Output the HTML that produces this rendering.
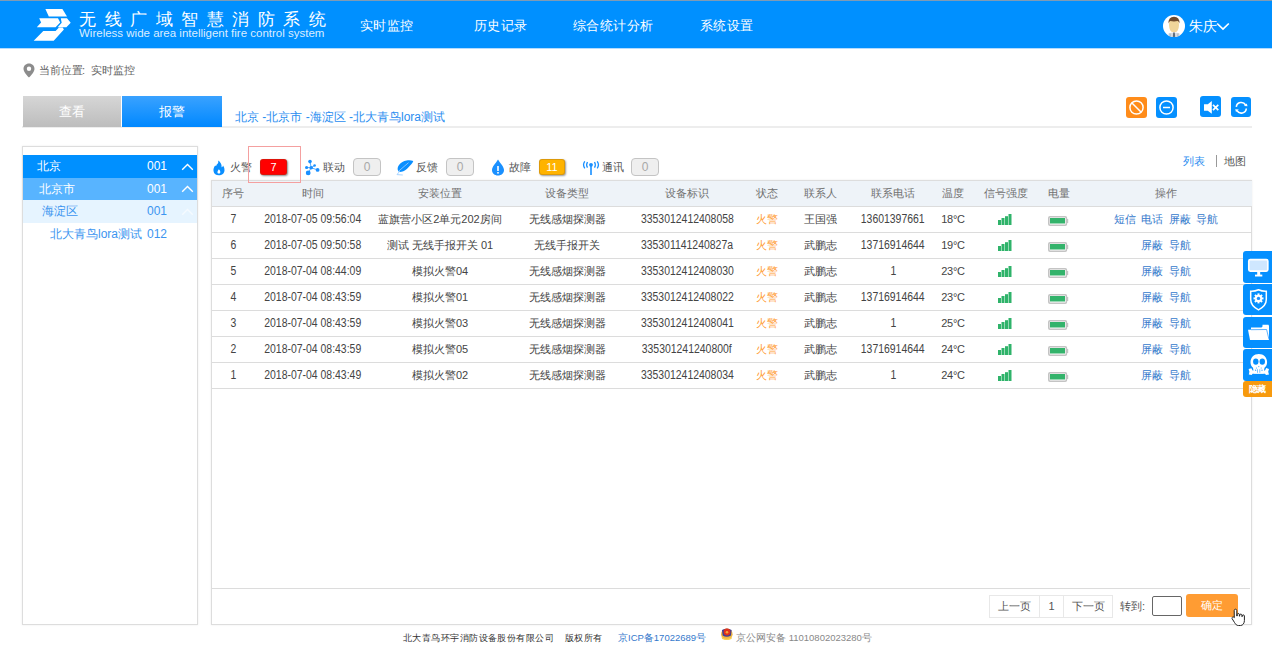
<!DOCTYPE html>
<html><head><meta charset="utf-8">
<style>
*{margin:0;padding:0;box-sizing:border-box}
html,body{width:1272px;height:649px;overflow:hidden;background:#fff;font-family:"Liberation Sans",sans-serif;color:#333}
.abs{position:absolute}
#top{position:absolute;left:0;top:0;width:1272px;height:1px;background:#7f9bb5;z-index:9}
#hdr{position:absolute;left:0;top:1px;width:1272px;height:47px;background:#0090ff}
.t1{position:absolute;left:79px;top:9px;font-size:17px;color:#fff;letter-spacing:8.5px;white-space:nowrap;line-height:20px}
.t2{position:absolute;left:79px;top:26px;font-size:11.5px;color:rgba(255,255,255,.86);white-space:nowrap;line-height:13px}
.nav{position:absolute;top:16px;font-size:13px;letter-spacing:0.4px;color:#fff;line-height:18px;white-space:nowrap}
.crumb{position:absolute;left:39px;top:63px;font-size:11px;color:#666;line-height:14px}
.tab{position:absolute;top:96px;height:31px;width:99px;z-index:2;color:#fff;font-size:13px;text-align:center;line-height:31px}
.path{position:absolute;left:235px;top:109px;font-size:12px;color:#2a8df0;line-height:16px;white-space:nowrap}
.hline{position:absolute;left:22px;top:126px;width:1230px;height:2px;background:#ededed}
.ico{position:absolute;top:97px;width:21px;height:21px;border-radius:3px;background:#0590ff}
#tree{position:absolute;left:22px;top:146px;width:176px;height:479px;border:1px solid #ddd;box-shadow:0 0 2px rgba(0,0,0,.08)}
.trow{position:absolute;left:0;width:174px;height:22.5px;font-size:12px;line-height:22px;white-space:nowrap}
.trow .n{position:absolute;left:124px}
.trow .c{position:absolute;left:159px;top:0}
#main{position:absolute;left:211px;top:180px;width:1041px;height:445px;border:1px solid #ddd;box-shadow:0 0 2px rgba(0,0,0,.08)}
.stat{position:absolute;top:158px;font-size:11px;color:#555;line-height:18px;white-space:nowrap}
.badge{position:absolute;height:16px;border-radius:3px;color:#fff;font-size:11px;text-align:center;line-height:14px;border:1px solid rgba(120,80,40,.25)}
.gbadge{position:absolute;top:158px;height:18px;width:28px;border:1.5px solid #c4c4c4;border-radius:4px;background:#efefef;color:#a8a8a8;font-size:12px;text-align:center;line-height:17px}
table{border-collapse:collapse;table-layout:fixed;position:absolute;left:0;top:0;width:1040px}
th{height:25px;background:#eef3f8;font-weight:normal;font-size:11px;color:#707070;border-bottom:1px solid #dcdcdc}
td{height:26px;font-size:11px;color:#444;text-align:center;border-bottom:1px solid #dcdcdc;white-space:nowrap}
.op{color:#3579cc;margin:0 1px}
.pg{position:absolute;top:595px;height:23px;border:1px solid #e8e8e8;font-size:11px;color:#555;line-height:21px;text-align:center}
.foot{position:absolute;top:632px;font-size:9.5px;line-height:12px;color:#333;white-space:nowrap}
.sb{position:absolute;left:1243px;width:31px;height:30.5px;background:#0590ff;border-radius:3px 0 0 3px}
.tmp{letter-spacing:-0.3px}
.num{display:inline-block;font-size:12px;transform:scaleX(0.87);letter-spacing:0}
</style></head><body>
<div id="top"></div><div class="abs" style="left:0;top:48px;width:1272px;height:1px;background:#b3dbff"></div>
<div id="hdr">
  <svg class="abs" style="left:0;top:-1px" width="80" height="48" viewBox="0 0 80 48">
    <g fill="#fff">
      <polygon points="45.4,9 62.4,9 67,16.4 48.8,16.4"/>
      <polygon points="60.8,18.3 67,18.3 70.7,22.7 66.4,27.2 57.7,27.2 61.7,22.7"/>
      <polygon points="39.2,18.3 58,18.3 60.2,22.6 55.6,27.2 36.8,27.2 41.1,22.6"/>
      <polygon points="33.7,40.8 53.7,40.8 63.9,29.4 62.7,27.5 59,27.5 55.6,30.9 43.3,30.9"/>
    </g>
  </svg>
  <div class="t1">无线广域智慧消防系统</div>
  <div class="t2">Wireless wide area intelligent fire control system</div>
  <div class="nav" style="left:360px">实时监控</div>
  <div class="nav" style="left:474px">历史记录</div>
  <div class="nav" style="left:573px">综合统计分析</div>
  <div class="nav" style="left:700px">系统设置</div>
  <div class="abs" style="left:1163px;top:14px;width:22px;height:22px;border-radius:50%;background:#fff;overflow:hidden">
    <svg width="22" height="22" viewBox="0 0 22 22">
      <path d="M6,10 Q5.6,3.5 11,3.5 Q16.4,3.5 16,10 Q15.6,15.5 13.2,17 L8.8,17 Q6.4,15.5 6,10Z" fill="#f0d59a"/>
      <path d="M5.6,8.5 Q5.2,1.8 11,1.8 Q16.8,1.8 16.4,8.5 Q16,6.6 14.8,6 Q11,6.8 7.2,6 Q6,6.6 5.6,8.5Z" fill="#6e4a2d"/>
      <path d="M5,22 L5.6,18.2 Q8,17.4 11,17.4 Q14,17.4 16.4,18.2 L17,22Z" fill="#d5dbe2"/>
      <path d="M10.2,17.6 L11.8,17.6 L12.2,22 L9.8,22Z" fill="#5d6b7a"/>
      <path d="M7,18.5 L7.3,22 M15,18.5 L14.7,22" stroke="#8c99a8" stroke-width="0.6"/>
    </svg>
  </div>
  <div class="nav" style="left:1189px;top:16px;font-size:14px;letter-spacing:0">朱庆</div>
  <svg class="abs" style="left:1216px;top:21px" width="14" height="9" viewBox="0 0 14 9"><path d="M1.2,1.5 L7,7 L12.8,1.5" stroke="#fff" stroke-width="1.7" fill="none"/></svg>
</div>
<svg class="abs" style="left:23px;top:63px" width="12" height="15" viewBox="0 0 12 15"><path d="M6,0.5 C2.8,0.5 0.5,2.9 0.5,5.9 C0.5,9.3 6,14.5 6,14.5 C6,14.5 11.5,9.3 11.5,5.9 C11.5,2.9 9.2,0.5 6,0.5Z M6,3.6 A2.2,2.2 0 1 1 6,8 A2.2,2.2 0 1 1 6,3.6Z" fill="#8c8c8c" fill-rule="evenodd"/></svg>
<div class="crumb">当前位置</div><div class="crumb" style="left:82px;top:62.5px">:</div><div class="crumb" style="left:91px">实时监控</div>
<div class="tab" style="left:23px;width:98px;background:linear-gradient(#d6d6d6,#bdbdbd)">查看</div>
<div class="tab" style="left:122px;width:100px;background:linear-gradient(#3aa2ff,#0088ff)">报警</div>
<div class="path">北京 -北京市 -海淀区 -北大青鸟lora测试</div>
<div class="hline"></div>
<div class="ico" style="left:1126px;background:#ff8c1a"><svg width="21" height="21" viewBox="0 0 21 21"><circle cx="10.5" cy="10.5" r="6.6" stroke="#fff" stroke-width="1.5" fill="none"/><path d="M6,6 L15,15" stroke="#fff" stroke-width="1.5"/></svg></div>
<div class="ico" style="left:1156px"><svg width="21" height="21" viewBox="0 0 21 21"><circle cx="10.5" cy="10.5" r="6.6" stroke="#fff" stroke-width="1.5" fill="none"/><path d="M7,10.5 L14,10.5" stroke="#fff" stroke-width="1.5"/></svg></div>
<div class="ico" style="left:1200px;top:96px"><svg width="21" height="21" viewBox="0 0 21 21"><path d="M4,8.2 L7.8,8.2 L11.8,5 L11.8,17.8 L7.8,14.8 L4,14.8Z" fill="#fff"/><path d="M13,8.8 L18.3,14.2 M18.3,8.8 L13,14.2" stroke="#fff" stroke-width="1.7"/></svg></div>
<div class="ico" style="left:1231px;width:20px;height:20px"><svg width="20" height="20" viewBox="0 0 20 20"><path d="M5.3,9.8 A5,5 0 0 1 14.6,8" stroke="#fff" stroke-width="1.6" fill="none"/><path d="M15.3,11.5 A5,5 0 0 1 6,13.6" stroke="#fff" stroke-width="1.6" fill="none"/><path d="M13,9 L16.5,9.2 L15.8,6.5Z" fill="#fff"/><path d="M7.8,12.6 L4.2,12.3 L5,15Z" fill="#fff"/></svg></div>


<div id="tree">
  <div class="trow" style="top:8px;background:#0090ff;color:#fff"><span style="position:absolute;left:14px">北京</span><span class="n">001</span><svg class="c" style="top:7.5px;left:158px" width="13" height="8" viewBox="0 0 13 8"><path d="M1.2,6.8 L6.5,1.6 L11.8,6.8" stroke="#fff" stroke-width="1.4" fill="none"/></svg></div>
  <div class="trow" style="top:30.5px;background:#58b4ff;color:#fff"><span style="position:absolute;left:16px">北京市</span><span class="n">001</span><svg class="c" style="top:7.5px;left:158px" width="13" height="8" viewBox="0 0 13 8"><path d="M1.2,6.8 L6.5,1.6 L11.8,6.8" stroke="#fff" stroke-width="1.4" fill="none"/></svg></div>
  <div class="trow" style="top:53px;background:#e6f4ff;color:#3c95f0"><span style="position:absolute;left:19px">海淀区</span><span class="n">001</span><svg class="c" style="top:7.5px;left:158px" width="13" height="8" viewBox="0 0 13 8"><path d="M1.2,6.8 L6.5,1.6 L11.8,6.8" stroke="#f5faff" stroke-width="1.4" fill="none"/></svg></div>
  <div class="trow" style="top:75.5px;color:#3c95f0"><span style="position:absolute;left:27px">北大青鸟lora测试</span><span class="n">012</span></div>
</div>

<svg class="abs" style="left:213px;top:160px" width="12" height="16" viewBox="0 0 12 16"><path d="M5,0.5 C6,2.8 4.5,4 3.6,4.8 C3.6,6 2.8,6.2 2.2,5.6 C0.8,7.4 0.3,9 0.5,11 C0.9,14 3,15.3 5.8,15.3 C9,15.3 11.5,13.2 11.5,10.2 C11.5,8 10.6,6.6 10,5.6 C9.8,6.8 9.2,7.3 8.6,7.2 C9,4.2 7.2,1.6 5,0.5Z M5.9,9.2 C7.6,10.8 8,13.5 5.9,13.6 C3.9,13.6 4.2,10.9 5.9,9.2Z" fill="#0a8fff" fill-rule="evenodd"/></svg>
<div class="stat" style="left:230px">火警</div>

<div class="badge" style="left:260px;top:159px;width:27px;background:#f00;box-shadow:1px 1px 2px rgba(0,0,0,.45)">7</div>
<svg class="abs" style="left:302px;top:157px" width="20" height="20" viewBox="0 0 20 20"><g stroke="#2a96ff" stroke-width="0.8"><path d="M8,4.6 L9.2,10.8 M4.6,10.5 L9.2,10.8 M12.6,8.5 L9.2,10.8 M15.6,12.9 L9.2,10.8 M6.2,15.9 L9.2,10.8"/></g><g fill="#1a8fff"><circle cx="8" cy="4.6" r="1.8"/><circle cx="4.6" cy="10.5" r="1.6"/><circle cx="9.2" cy="10.8" r="1.8"/><circle cx="12.6" cy="8.5" r="1.3"/><circle cx="15.6" cy="12.9" r="1.9"/><circle cx="6.2" cy="15.9" r="2.4"/></g></svg>
<div class="stat" style="left:323px">联动</div>
<div class="gbadge" style="left:353px">0</div>
<svg class="abs" style="left:396px;top:160px" width="18" height="16" viewBox="0 0 18 16"><path d="M17.3,1 C15,0.2 12.5,0.2 10.6,0.6 C7.5,1.2 5,2.5 3,5 C1.8,6.6 1.4,8.5 1.8,10 C2.2,11.5 3.5,12.2 5.5,11.8 C8,11.3 10.5,9.5 12.3,7.5 C14.5,5.2 16.5,3.5 17.3,1Z" fill="#0a8fff"/><path d="M2.6,11.2 L12.5,2.7" stroke="#9fd0ff" stroke-width="0.8"/><path d="M3.5,11.5 L1,14.6 L6.8,15" stroke="#a8d4ff" stroke-width="1" fill="none"/></svg>
<div class="stat" style="left:416px">反馈</div>
<div class="gbadge" style="left:446px">0</div>
<svg class="abs" style="left:491px;top:159px" width="14" height="17" viewBox="0 0 14 17"><path d="M7,0.5 C5,4 1,7.5 1,11 C1,14.3 3.7,16.5 7,16.5 C10.3,16.5 13,14.3 13,11 C13,7.5 9,4 7,0.5Z" fill="#1a90ff"/><rect x="6.2" y="7" width="1.6" height="5" fill="#fff"/><rect x="6.2" y="13" width="1.6" height="1.6" fill="#fff"/></svg>
<div class="stat" style="left:509px">故障</div>
<div class="badge" style="left:539px;top:159px;width:26px;background:#ffb300;box-shadow:1px 1px 2px rgba(0,0,0,.4)">11</div>
<svg class="abs" style="left:582px;top:161px" width="18" height="14" viewBox="0 0 18 14"><circle cx="9" cy="3.8" r="1.9" fill="#1a90ff"/><rect x="8.2" y="4" width="1.6" height="10" fill="#1a90ff"/><g stroke="#1a90ff" stroke-width="1.3" fill="none"><path d="M5.5,1 Q3.8,3.8 5.5,6.6"/><path d="M12.5,1 Q14.2,3.8 12.5,6.6"/><path d="M2.8,0.3 Q0.3,3.8 2.8,7.3"/><path d="M15.2,0.3 Q17.7,3.8 15.2,7.3"/></g></svg>
<div class="stat" style="left:602px">通讯</div>
<div class="gbadge" style="left:631px">0</div>
<div class="stat" style="left:1183px;top:152px;color:#2a8df0">列表</div>
<div class="abs" style="left:1216px;top:155px;width:1px;height:12px;background:#999"></div>
<div class="stat" style="left:1224px;top:152px">地图</div>
<div id="main">
<table>
<colgroup><col style="width:42px"><col style="width:118px"><col style="width:136px"><col style="width:118px"><col style="width:122px"><col style="width:38px"><col style="width:68px"><col style="width:78px"><col style="width:42px"><col style="width:64px"><col style="width:42px"><col style="width:172px"></colgroup>
<tr><th>序号</th><th>时间</th><th>安装位置</th><th>设备类型</th><th>设备标识</th><th>状态</th><th>联系人</th><th>联系电话</th><th>温度</th><th>信号强度</th><th>电量</th><th>操作</th></tr>
<tr><td><span class="num">7</span></td><td><span class="num">2018-07-05 09:56:04</span></td><td>蓝旗营小区2单元202房间</td><td>无线感烟探测器</td><td><span class="num">3353012412408058</span></td><td style="color:#ff9c33">火警</td><td>王国强</td><td><span class="num">13601397661</span></td><td><span class="tmp">18°C</span></td><td><svg width="14" height="11" viewBox="0 0 14 11" style="vertical-align:middle;position:relative;left:-1px"><g fill="#2fb36a"><rect x="0" y="6" width="3" height="5"/><rect x="3.5" y="4" width="3" height="7"/><rect x="7" y="2.2" width="3" height="8.8"/><rect x="10.5" y="0" width="3" height="11"/></g></svg></td><td><svg width="21" height="10" viewBox="0 0 21 10" style="vertical-align:middle;position:relative;left:-1px;top:1px"><rect x="0.8" y="0.8" width="17.6" height="8.4" rx="1.2" fill="#fff" stroke="#c4c4c4" stroke-width="1.6"/><rect x="19" y="3" width="1.2" height="4" fill="#c4c4c4"/><rect x="2" y="2" width="15" height="5.5" fill="#33b36b"/></svg></td><td><span class="op">短信</span> <span class="op">电话</span> <span class="op">屏蔽</span> <span class="op">导航</span></td></tr>
<tr><td><span class="num">6</span></td><td><span class="num">2018-07-05 09:50:58</span></td><td>测试 无线手报开关 01</td><td>无线手报开关</td><td><span class="num">335301141240827a</span></td><td style="color:#ff9c33">火警</td><td>武鹏志</td><td><span class="num">13716914644</span></td><td><span class="tmp">19°C</span></td><td><svg width="14" height="11" viewBox="0 0 14 11" style="vertical-align:middle;position:relative;left:-1px"><g fill="#2fb36a"><rect x="0" y="6" width="3" height="5"/><rect x="3.5" y="4" width="3" height="7"/><rect x="7" y="2.2" width="3" height="8.8"/><rect x="10.5" y="0" width="3" height="11"/></g></svg></td><td><svg width="21" height="10" viewBox="0 0 21 10" style="vertical-align:middle;position:relative;left:-1px;top:1px"><rect x="0.8" y="0.8" width="17.6" height="8.4" rx="1.2" fill="#fff" stroke="#c4c4c4" stroke-width="1.6"/><rect x="19" y="3" width="1.2" height="4" fill="#c4c4c4"/><rect x="2" y="2" width="15" height="5.5" fill="#33b36b"/></svg></td><td><span class="op">屏蔽</span> <span class="op">导航</span></td></tr>
<tr><td><span class="num">5</span></td><td><span class="num">2018-07-04 08:44:09</span></td><td>模拟火警04</td><td>无线感烟探测器</td><td><span class="num">3353012412408030</span></td><td style="color:#ff9c33">火警</td><td>武鹏志</td><td><span class="num">1</span></td><td><span class="tmp">23°C</span></td><td><svg width="14" height="11" viewBox="0 0 14 11" style="vertical-align:middle;position:relative;left:-1px"><g fill="#2fb36a"><rect x="0" y="6" width="3" height="5"/><rect x="3.5" y="4" width="3" height="7"/><rect x="7" y="2.2" width="3" height="8.8"/><rect x="10.5" y="0" width="3" height="11"/></g></svg></td><td><svg width="21" height="10" viewBox="0 0 21 10" style="vertical-align:middle;position:relative;left:-1px;top:1px"><rect x="0.8" y="0.8" width="17.6" height="8.4" rx="1.2" fill="#fff" stroke="#c4c4c4" stroke-width="1.6"/><rect x="19" y="3" width="1.2" height="4" fill="#c4c4c4"/><rect x="2" y="2" width="15" height="5.5" fill="#33b36b"/></svg></td><td><span class="op">屏蔽</span> <span class="op">导航</span></td></tr>
<tr><td><span class="num">4</span></td><td><span class="num">2018-07-04 08:43:59</span></td><td>模拟火警01</td><td>无线感烟探测器</td><td><span class="num">3353012412408022</span></td><td style="color:#ff9c33">火警</td><td>武鹏志</td><td><span class="num">13716914644</span></td><td><span class="tmp">23°C</span></td><td><svg width="14" height="11" viewBox="0 0 14 11" style="vertical-align:middle;position:relative;left:-1px"><g fill="#2fb36a"><rect x="0" y="6" width="3" height="5"/><rect x="3.5" y="4" width="3" height="7"/><rect x="7" y="2.2" width="3" height="8.8"/><rect x="10.5" y="0" width="3" height="11"/></g></svg></td><td><svg width="21" height="10" viewBox="0 0 21 10" style="vertical-align:middle;position:relative;left:-1px;top:1px"><rect x="0.8" y="0.8" width="17.6" height="8.4" rx="1.2" fill="#fff" stroke="#c4c4c4" stroke-width="1.6"/><rect x="19" y="3" width="1.2" height="4" fill="#c4c4c4"/><rect x="2" y="2" width="15" height="5.5" fill="#33b36b"/></svg></td><td><span class="op">屏蔽</span> <span class="op">导航</span></td></tr>
<tr><td><span class="num">3</span></td><td><span class="num">2018-07-04 08:43:59</span></td><td>模拟火警03</td><td>无线感烟探测器</td><td><span class="num">3353012412408041</span></td><td style="color:#ff9c33">火警</td><td>武鹏志</td><td><span class="num">1</span></td><td><span class="tmp">25°C</span></td><td><svg width="14" height="11" viewBox="0 0 14 11" style="vertical-align:middle;position:relative;left:-1px"><g fill="#2fb36a"><rect x="0" y="6" width="3" height="5"/><rect x="3.5" y="4" width="3" height="7"/><rect x="7" y="2.2" width="3" height="8.8"/><rect x="10.5" y="0" width="3" height="11"/></g></svg></td><td><svg width="21" height="10" viewBox="0 0 21 10" style="vertical-align:middle;position:relative;left:-1px;top:1px"><rect x="0.8" y="0.8" width="17.6" height="8.4" rx="1.2" fill="#fff" stroke="#c4c4c4" stroke-width="1.6"/><rect x="19" y="3" width="1.2" height="4" fill="#c4c4c4"/><rect x="2" y="2" width="15" height="5.5" fill="#33b36b"/></svg></td><td><span class="op">屏蔽</span> <span class="op">导航</span></td></tr>
<tr><td><span class="num">2</span></td><td><span class="num">2018-07-04 08:43:59</span></td><td>模拟火警05</td><td>无线感烟探测器</td><td><span class="num">335301241240800f</span></td><td style="color:#ff9c33">火警</td><td>武鹏志</td><td><span class="num">13716914644</span></td><td><span class="tmp">24°C</span></td><td><svg width="14" height="11" viewBox="0 0 14 11" style="vertical-align:middle;position:relative;left:-1px"><g fill="#2fb36a"><rect x="0" y="6" width="3" height="5"/><rect x="3.5" y="4" width="3" height="7"/><rect x="7" y="2.2" width="3" height="8.8"/><rect x="10.5" y="0" width="3" height="11"/></g></svg></td><td><svg width="21" height="10" viewBox="0 0 21 10" style="vertical-align:middle;position:relative;left:-1px;top:1px"><rect x="0.8" y="0.8" width="17.6" height="8.4" rx="1.2" fill="#fff" stroke="#c4c4c4" stroke-width="1.6"/><rect x="19" y="3" width="1.2" height="4" fill="#c4c4c4"/><rect x="2" y="2" width="15" height="5.5" fill="#33b36b"/></svg></td><td><span class="op">屏蔽</span> <span class="op">导航</span></td></tr>
<tr><td><span class="num">1</span></td><td><span class="num">2018-07-04 08:43:49</span></td><td>模拟火警02</td><td>无线感烟探测器</td><td><span class="num">3353012412408034</span></td><td style="color:#ff9c33">火警</td><td>武鹏志</td><td><span class="num">1</span></td><td><span class="tmp">24°C</span></td><td><svg width="14" height="11" viewBox="0 0 14 11" style="vertical-align:middle;position:relative;left:-1px"><g fill="#2fb36a"><rect x="0" y="6" width="3" height="5"/><rect x="3.5" y="4" width="3" height="7"/><rect x="7" y="2.2" width="3" height="8.8"/><rect x="10.5" y="0" width="3" height="11"/></g></svg></td><td><svg width="21" height="10" viewBox="0 0 21 10" style="vertical-align:middle;position:relative;left:-1px;top:1px"><rect x="0.8" y="0.8" width="17.6" height="8.4" rx="1.2" fill="#fff" stroke="#c4c4c4" stroke-width="1.6"/><rect x="19" y="3" width="1.2" height="4" fill="#c4c4c4"/><rect x="2" y="2" width="15" height="5.5" fill="#33b36b"/></svg></td><td><span class="op">屏蔽</span> <span class="op">导航</span></td></tr>
</table>
<div class="abs" style="left:0;top:407px;width:1038px;height:1px;background:#dcdcdc"></div>
</div>

<div class="pg" style="left:989px;width:51px">上一页</div>
<div class="pg" style="left:1039px;width:25px;border-left:1px solid #e8e8e8">1</div>
<div class="pg" style="left:1063px;width:50px">下一页</div>
<div class="stat" style="left:1120px;top:597px">转到:</div>
<div class="abs" style="left:1152px;top:596px;width:30px;height:20px;border:1px solid #666;border-radius:2px;background:#fff"></div>
<div class="abs" style="left:1186px;top:594px;width:52px;height:23px;background:#ff9c33;border-radius:3px;color:#fff;font-size:11px;text-align:center;line-height:23px">确定</div>
<svg class="abs" style="left:1231px;top:608px" width="16" height="19" viewBox="0 0 16 19"><path d="M4.5,1.2 C5.3,1.2 5.8,1.8 5.8,2.6 L5.8,8 L6.2,8 L6.2,6.6 C6.2,5.9 6.7,5.5 7.3,5.5 C7.9,5.5 8.4,5.9 8.4,6.6 L8.4,8.2 L8.7,8.2 L8.7,7.2 C8.7,6.5 9.2,6.1 9.8,6.1 C10.4,6.1 10.9,6.5 10.9,7.2 L10.9,8.6 L11.2,8.6 L11.2,8 C11.2,7.3 11.7,6.9 12.3,6.9 C12.9,6.9 13.4,7.3 13.4,8 L13.4,12.5 C13.4,15 12,17.5 9.5,17.5 L7.5,17.5 C5.5,17.5 4.8,16.5 3.5,14.5 L1.2,10.8 C0.8,10.1 1,9.4 1.6,9.1 C2.2,8.8 2.9,9 3.3,9.6 L3.3,9.7 L3.2,2.6 C3.2,1.8 3.7,1.2 4.5,1.2Z" fill="#fff" stroke="#222" stroke-width="1"/></svg>
<div class="foot" style="left:403px;font-size:9px;letter-spacing:0.45px;top:631.5px">北大青鸟环宇消防设备股份有限公司</div>
<div class="foot" style="left:565px;font-size:9px;letter-spacing:0.45px;top:631.5px">版权所有</div>
<div class="foot" style="left:618px;color:#3579cc">京ICP备17022689号</div>
<svg class="abs" style="left:720px;top:626px" width="14" height="15" viewBox="0 0 14 15"><ellipse cx="6.8" cy="8.2" rx="5.8" ry="5.6" fill="#f0b640"/><path d="M2,4 Q6.8,1.5 11.6,4 L11,9.5 Q6.8,12 2.6,9.5Z" fill="#3a3f9a"/><circle cx="7" cy="6" r="3.4" fill="#e0321c"/><circle cx="7" cy="6.3" r="1.3" fill="#f4a23a"/><path d="M1.5,11 Q6.8,14.5 12.1,11 L11.5,13 Q6.8,15 2.1,13Z" fill="#f7cf55"/></svg>
<div class="foot" style="left:736px;color:#888">京公网安备 11010802023280号</div>
<div class="sb" style="top:251px;height:31.5px"><svg width="31" height="31" viewBox="0 0 31 31"><rect x="5.8" y="8.6" width="19" height="11.5" rx="1.5" stroke="#fff" stroke-width="1.7" fill="#cfe7ff"/><rect x="14.2" y="20.5" width="3" height="3.5" fill="#fff"/><rect x="12" y="23.6" width="7.3" height="1.9" fill="#fff"/></svg></div>
<div class="sb" style="top:284px"><svg width="31" height="31" viewBox="0 0 31 31"><path d="M15.5,5.8 C18.5,7.2 21,7.4 23.3,7.3 L23.3,15.5 C23.3,20.5 19.5,23.8 15.5,25.8 C11.5,23.8 7.7,20.5 7.7,15.5 L7.7,7.3 C10,7.4 12.5,7.2 15.5,5.8Z" stroke="#fff" stroke-width="1.5" fill="none"/><g transform="translate(15.5,14.4)" fill="#fff"><circle r="3.6"/><g id="teeth"><rect x="-1" y="-5" width="2" height="2.2"/><rect x="-1" y="2.8" width="2" height="2.2"/><rect x="-5" y="-1" width="2.2" height="2"/><rect x="2.8" y="-1" width="2.2" height="2"/></g><g transform="rotate(45)"><rect x="-1" y="-5" width="2" height="2.2"/><rect x="-1" y="2.8" width="2" height="2.2"/><rect x="-5" y="-1" width="2.2" height="2"/><rect x="2.8" y="-1" width="2.2" height="2"/></g><circle r="1.7" fill="#1a90ff"/></g></svg></div>
<div class="sb" style="top:317px;height:30.5px"><svg width="31" height="31" viewBox="0 0 31 31"><path d="M8,10.5 L18.5,10.5 L19.5,9.5 L19.5,7.8 L25.5,7.8 L26,9 L26,23 L8,23Z" fill="#fff"/><path d="M5,12.8 L23.6,12.6 L26,23 L7,23Z" fill="#fff"/><path d="M8,12.7 L23.6,12.5 L26,22.5" stroke="#1a90ff" stroke-width="0.7" fill="none"/></svg></div>
<div class="sb" style="top:349px;height:32px"><svg width="31" height="31" viewBox="0 0 31 31"><path d="M15.8,4.9 C20.6,4.9 24.1,8.4 24.1,13 C24.1,15.8 23,17.6 21.5,18.8 L20.5,24.6 L11,24.6 L10,18.8 C8.5,17.6 7.5,15.8 7.5,13 C7.5,8.4 11,4.9 15.8,4.9Z" fill="#fff"/><ellipse cx="12.8" cy="12.6" rx="2.7" ry="3.2" fill="#0590ff"/><ellipse cx="19.3" cy="12.6" rx="2.7" ry="3.2" fill="#0590ff"/><path d="M5.6,20 L8.4,19.2 L9.6,21.4 L22,21.4 L23.2,19 L26,20 L25.2,22.8 L26,25.6 L23,26 L22,24.8 L9.6,24.8 L8.6,26 L5.8,25.6 L6.4,22.8Z" fill="#fff"/><g fill="#0590ff" opacity=".75"><circle cx="15.8" cy="17.6" r="0.6"/><circle cx="13.5" cy="19" r="0.6"/><circle cx="18.2" cy="19" r="0.6"/><circle cx="12.6" cy="21.3" r="0.7"/><circle cx="19" cy="21.3" r="0.7"/><rect x="14.3" y="20.2" width="0.7" height="3.6"/><rect x="16.5" y="20.2" width="0.7" height="3.6"/></g></svg></div>
<div class="abs" style="left:1243px;top:381px;width:31px;height:16px;background:#f79a0e;border-radius:3px 0 0 3px;color:#fff;font-size:9px;line-height:16px;padding-left:6px;font-weight:bold;letter-spacing:-0.6px;white-space:nowrap">隐藏</div>
<div class="abs" style="left:248px;top:146px;width:53px;height:37px;border:1px solid #f4a0a0;z-index:5"></div>
</body></html>
